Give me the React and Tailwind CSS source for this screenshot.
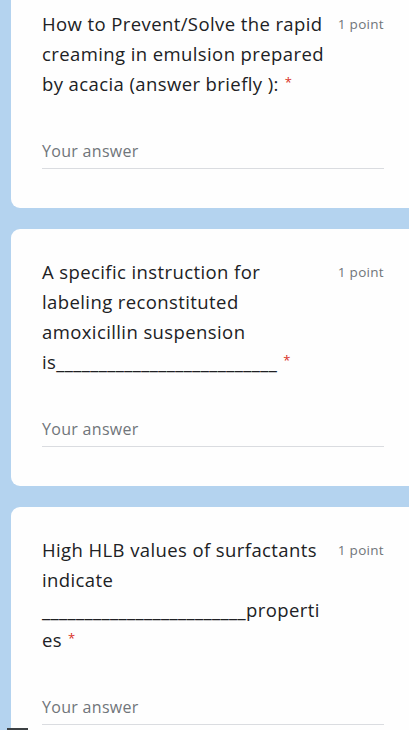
import React from 'react'

const questions = [
  {
    id: 'q1',
    lines: ['How to Prevent/Solve the rapid', 'creaming in emulsion prepared', 'by acacia (answer briefly ):'],
    first: true,
  },
  {
    id: 'q2',
    lines: ['A specific instruction for', 'labeling reconstituted', 'amoxicillin suspension', 'is__________________________'],
  },
  {
    id: 'q3',
    lines: ['High HLB values of surfactants', 'indicate', '________________________properti', 'es'],
  },
]

function QuestionCard({ lines, first }) {
  return (
    <section
      className={`rounded-l-[9px] bg-[#fefefe] pl-[31px] pr-[25px] pt-[28px] pb-[39px] ${first ? '-mt-[19px]' : ''}`}
    >
      <div className="flex items-start gap-3">
        <p className="min-w-0 flex-1 whitespace-nowrap text-[18.5px] leading-[30px] tracking-[0.4px] text-[#202124]">
          {lines.map((line, i) => (
            <React.Fragment key={i}>
              {i > 0 && <br />}
              {line}
            </React.Fragment>
          ))}
          <span className="relative -top-[4px] ml-[6px] text-[13px] text-[#d93025]">*</span>
        </p>
        <span className="shrink-0 text-[13.5px] leading-[30px] tracking-[0.3px] text-[#70757a]">
          1 point
        </span>
      </div>
      <div className="mt-[40px] border-b border-[#dadce0] pb-[7px] text-[16px] leading-[20px] tracking-[0.3px] text-[#70757a]">
        Your answer
      </div>
    </section>
  )
}

export default function App() {
  return (
    <div
      className="relative h-[730px] w-[409px] overflow-hidden bg-[#b4d3ef] pl-[11px]"
      style={{ fontFamily: '"Open Sans", Roboto, sans-serif' }}
    >
      <div className="flex flex-col gap-[21px]">
        {questions.map((q) => (
          <QuestionCard key={q.id} lines={q.lines} first={q.first} />
        ))}
      </div>
      <div className="absolute bottom-0 left-[7px] h-[2px] w-[21px] bg-[#3c4043]" />
    </div>
  )
}
